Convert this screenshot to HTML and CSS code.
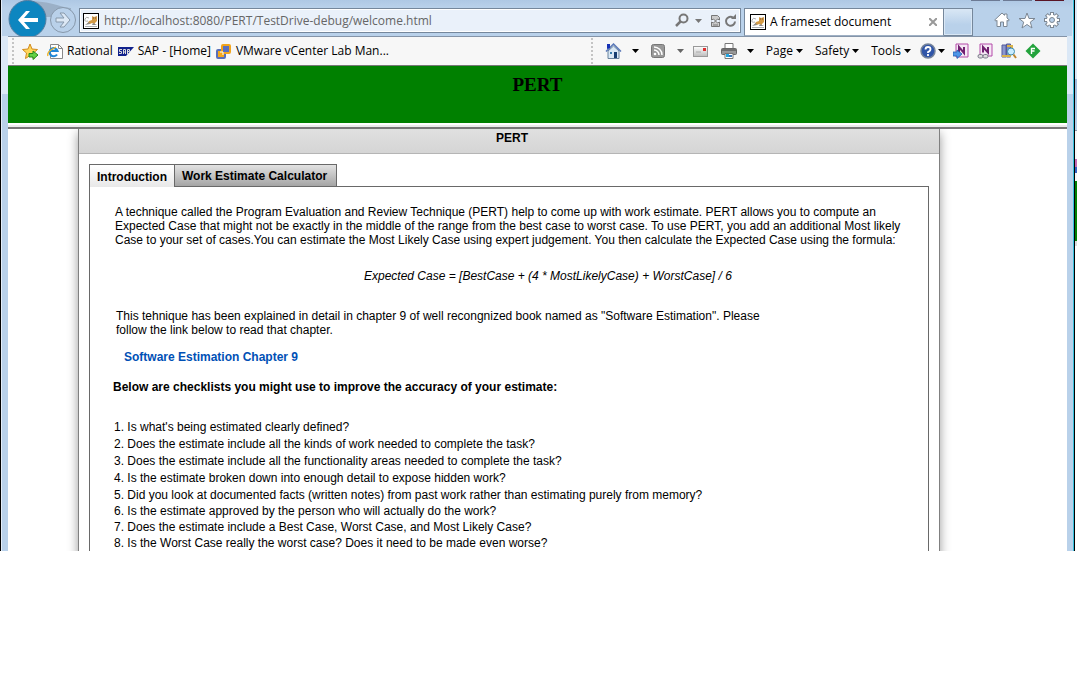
FILE: index.html
```html
<!DOCTYPE html>
<html lang="en">
<head>
<meta charset="utf-8">
<title>A frameset document</title>
<link rel="stylesheet" href="styles.css">
</head>
<body>
<svg width="0" height="0" class="defs" aria-hidden="true">
  <defs>
    <symbol id="cat" viewBox="0 0 16 16">
      <rect x=".5" y=".5" width="15" height="15" fill="#fff" stroke="#000"/>
      <path d="M2 13h12v1H2z" fill="#a9adb1"/>
      <path d="M5 8Q1 9 2 6t4-1" fill="none" stroke="#aaa"/>
      <path d="M4 11l2-3 3-1V3l2 1 3-1v5l-2 2v1l-3-1-2 1z" fill="#d39a45"/>
      <path d="M2 12l4-3 1 2zM10 10l4 2h-5z" fill="#888"/>
      <path d="M10 5h1M12 5h1" stroke="#754"/>
    </symbol>
    <symbol id="caret" viewBox="0 0 7 4"><path d="M0 0h7L3.500 4z" fill="currentColor"/></symbol>
    <linearGradient id="silver" x2="0" y2="1"><stop stop-color="#fff"/><stop offset="1" stop-color="#bbb"/></linearGradient>
  </defs>
</svg>
<div class="screen">
<div class="window">
  <header class="nav">
    <div class="captions" aria-hidden="true"><i></i><i></i><i class="close-cap"></i></div>
    <button class="back" aria-label="Back">
      <svg width="68" height="36" viewBox="0 0 68 36">
        <path d="M25 1q15 1 24 4t14 3v9H25z" fill="#9bb0c7"/>
        <circle cx="19.500" cy="19" r="18.500" fill="#0d86c0" stroke="#507c9f"/>
        <path d="M10 20l8-9h4l-6 7h14v4H16l6 7h-4z" fill="#fff"/>
        <circle cx="55" cy="20" r="12.500" fill="#b9d1ea" stroke="#8798aa"/>
        <path d="M48 18h8l-4-5h4l6 7-6 7h-4l4-5h-8z" fill="#dce8f5" stroke="#8798aa"/>
      </svg>
    </button>
    <form class="address">
      <svg width="16" height="16"><use href="#cat"/></svg>
      <input aria-label="Address" value="http://localhost:8080/PERT/TestDrive-debug/welcome.html">
      <svg width="62" height="16" viewBox="0 0 62 16" fill="none" stroke="#777" stroke-width="2">
        <circle cx="8.500" cy="5.500" r="4"/><path d="M5.500 8.500L1 13" stroke-width="2.500"/>
        <path d="M20 6h7l-3.500 4z" fill="#777" stroke="none"/>
        <path d="M36.500 7V2.500h6l2 2V7l-2-1-2 2-2-2zM36.500 9l2 1 2-2 2 2 2-1v4.500h-8z" stroke-width="1" fill="#ccc"/>
        <path d="M38 12h5" stroke-width="1"/>
        <path d="M58 4.500a4.500 4.500 0 1 0 2 4"/><path d="M56 6h5V1z" fill="#777" stroke="none"/>
      </svg>
    </form>
    <div class="tab">
      <svg width="16" height="16"><use href="#cat"/></svg>
      <span>A frameset document</span>
      <button class="x" aria-label="Close tab"><svg width="8" height="8" viewBox="0 0 8 8"><path d="M0 0l8 8M8 0L0 8" stroke="#999" stroke-width="2"/></svg></button>
    </div>
    <button class="newtab" aria-label="New tab"></button>
    <div class="tools">
      <button aria-label="Home"><svg width="16" height="16" viewBox="0 0 16 16"><path d="M.7 8L8 1l2.500 2.300V2H13v4l2.300 2-1.300 1.200-1-.9v6.200H9.500V10h-3v4.500H3V8.300l-1 .9z" fill="#fff" stroke="#7c8793"/></svg></button>
      <button aria-label="Favorites"><svg width="18" height="17" viewBox="0 0 18 17"><path d="M9 1l2 5.500h6l-4.700 3.600L14 16l-5-3.500L4 16l1.700-5.900L1 6.500h6z" fill="#fff" stroke="#7c8793"/></svg></button>
      <button aria-label="Settings"><svg width="16" height="16" viewBox="0 0 16 16"><g fill="#7c8793"><circle cx="8" cy="8" r="6"/><path d="M6 0h4v16H6z"/><path d="M6 0h4v16H6z" transform="rotate(45 8 8)"/><path d="M6 0h4v16H6z" transform="rotate(90 8 8)"/><path d="M6 0h4v16H6z" transform="rotate(135 8 8)"/></g><g fill="#fff"><circle cx="8" cy="8" r="5.200"/><path d="M7 1h2v14H7z"/><path d="M7 1h2v14H7z" transform="rotate(45 8 8)"/><path d="M7 1h2v14H7z" transform="rotate(90 8 8)"/><path d="M7 1h2v14H7z" transform="rotate(135 8 8)"/></g><circle cx="8" cy="8" r="2.500" fill="#b9d1ea" stroke="#7c8793"/></svg></button>
    </div>
  </header>

  <div class="client">
    <div class="bars">
      <nav class="links">
        <button class="add" aria-label="Add to favorites"><svg width="17" height="17" viewBox="0 0 17 17"><path d="M8 1l2 5 5.500.5-4 3.500 1 5.500L8 12.500 3.500 15.500l1-5.500-4-3.500L6 6z" fill="#ffd65a" stroke="#d18a1d"/><path d="M7 10.500h4V8l5 4-5 4.500V14H7z" fill="#63d145" stroke="#248a1c"/></svg></button>
        <a href="#rational"><svg width="16" height="17" viewBox="0 0 16 17"><path d="M3.500 1.500h8l4 4v10h-12z" fill="#fff" stroke="#888"/><path d="M11.500 1.500v4h4" fill="none" stroke="#888"/><path d="M10 11.500A4 4 0 1 1 10.500 8H4" fill="none" stroke="#1e86d6" stroke-width="2.200"/><path d="M1 13Q-1 9 9 4" fill="none" stroke="#f0b323" stroke-width="1.300"/></svg><span>Rational</span></a>
        <a href="#sap"><svg width="16" height="9" viewBox="0 0 16 9"><path d="M0 0h16l-8 9H0z" fill="#11228c"/><path d="M4 2.500H1.500v2h2v2H1M5.500 7V2.500h2V7M5.500 5h2M9.500 7V2.500h2v2h-2" fill="none" stroke="#ddd"/></svg><span>SAP - [Home]</span></a>
        <a href="#vmware"><svg width="16" height="16" viewBox="0 0 16 16" fill="none" stroke-width="2"><rect x="1" y="7" width="8" height="8" rx="1" stroke="#5a6fb8" fill="#f5a81c"/><rect x="6" y="2" width="8" height="8" rx="1" stroke="#f2a51d" fill="#5a70c0"/><path d="M4 9h3v3" stroke="#fff" stroke-width="1"/></svg><span>VMware vCenter Lab Man...</span></a>
      </nav>
      <div class="commands">
        <button class="home" aria-label="Home page"><svg width="17" height="17" viewBox="0 0 17 17"><path d="M3 8l5.500-5L14 8v7.500H3z" fill="#d9e8f5" stroke="#68829d"/><path d="M1 8.500L8.500 1 16 8.500" fill="none" stroke="#5a78b8" stroke-width="1.500"/><path d="M2 1h3v4L2 6z" fill="#1530b5"/><path d="M5 9h2v2H5z" fill="#387cac"/><path d="M9 9h3v6H9z" fill="#163c70"/></svg><svg class="caret"><use href="#caret"/></svg></button>
        <button class="feed" aria-label="Feeds"><svg width="14" height="14" viewBox="0 0 14 14"><rect x=".5" y=".5" width="13" height="13" rx="2" fill="#999" stroke="#777"/><circle cx="4" cy="10" r="1.300" fill="#fff"/><path d="M3 6a5 5 0 0 1 5 5M3 3a8 8 0 0 1 8 8" fill="none" stroke="#fff" stroke-width="1.500"/></svg><svg class="caret gray"><use href="#caret"/></svg></button>
        <button class="mail" aria-label="Read mail"><svg width="15" height="11" viewBox="0 0 15 11"><rect x=".5" y=".5" width="14" height="10" fill="url(#silver)" stroke="#999"/><path d="M10 2h3v3h-3z" fill="#dd3030"/><path d="M3 6h5" stroke="#aaa"/></svg></button>
        <button class="print" aria-label="Print"><svg width="16" height="16" viewBox="0 0 16 16"><path d="M4 .5h8V6H4z" fill="#fff" stroke="#777"/><rect x=".5" y="5.500" width="15" height="6" rx="1" fill="#999" stroke="#666"/><path d="M1 7h14" stroke="#444"/><path d="M4 10.500h8v5H4z" fill="#fff" stroke="#777"/><path d="M5 11h3v3H5z" fill="#22a7e0"/><path d="M8 12h3v2H8z" fill="#3b74b7"/></svg><svg class="caret"><use href="#caret"/></svg></button>
        <button class="menu">Page<svg class="caret"><use href="#caret"/></svg></button>
        <button class="menu">Safety<svg class="caret"><use href="#caret"/></svg></button>
        <button class="menu">Tools<svg class="caret"><use href="#caret"/></svg></button>
        <button class="help" aria-label="Help"><svg width="16" height="16" viewBox="0 0 16 16"><circle cx="8" cy="8" r="7" fill="#2f55a8" stroke="#75839a" stroke-width="1.500"/><path d="M5.500 6.500Q5.500 4 8 4t2.500 2T8 9v1M8 11v2" fill="none" stroke="#fff" stroke-width="1.800"/></svg><svg class="caret"><use href="#caret"/></svg></button>
        <button class="one" aria-label="Send to OneNote"><svg width="16" height="16" viewBox="0 0 16 16"><path d="M3 1h12v13H3z" fill="#f5e8f5" stroke="#b44ba9"/><path d="M6 10V4l5 6V4" fill="none" stroke="#702070" stroke-width="2"/><path d="M0 9h4V7l5 4-5 4.500V13H0z" fill="#4d96e8" stroke="#2460b0" stroke-width=".8"/></svg></button>
        <button class="one" aria-label="OneNote Linked Notes"><svg width="16" height="16" viewBox="0 0 16 16"><path d="M3 1h12v12H3z" fill="#f5e8f5" stroke="#b44ba9"/><path d="M6 9.500V4l5 5.500V4" fill="none" stroke="#702070" stroke-width="2"/><g fill="#ddd" stroke="#778"><rect x="1" y="11.500" width="5" height="3.500" rx="1.700"/><rect x="6" y="11.500" width="5" height="3.500" rx="1.700"/></g></svg></button>
        <button class="one" aria-label="Research"><svg width="16" height="16" viewBox="0 0 16 16"><path d="M1 2h4v12H1z" fill="#8a97cf" stroke="#555a99"/><path d="M5.500 1h4v13h-4z" fill="#7d8ac4" stroke="#555a99"/><path d="M6 2h6v2H6zM10 4h2v3h-2zM1 12h9v2H1z" fill="#d9b34a"/><circle cx="10" cy="8.500" r="3.500" fill="#c8ecff" stroke="#3f8cae"/><path d="M12.500 11.500L15 15" stroke="#be852d" stroke-width="2"/></svg></button>
        <button class="one" aria-label="Fiddler"><svg width="16" height="16" viewBox="0 0 16 16"><path d="M8 .5L15.500 8 8 15.500.5 8z" fill="#23a33d"/><path d="M6.500 11V5.500H10M6.500 8H9.500" fill="none" stroke="#fff" stroke-width="1.400"/></svg></button>
      </div>
    </div>
    <div class="banner"><h1>PERT</h1></div>
    <div class="splitter"></div>
    <main class="frame">
      <section class="panel">
        <h2>PERT</h2>
        <div class="tabs" role="tablist">
          <button role="tab" aria-selected="true" class="ptab active">Introduction</button>
          <button role="tab" aria-selected="false" class="ptab">Work Estimate Calculator</button>
        </div>
        <article class="body">
          <p class="intro">A technique called the Program Evaluation and Review Technique (PERT) help to come up with work estimate. PERT allows you to compute an<br>Expected Case that might not be exactly in the middle of the range from the best case to worst case. To use PERT, you add an additional Most likely<br>Case to your set of cases.You can estimate the Most Likely Case using expert judgement. You then calculate the Expected Case using the formula:</p>
          <p class="formula">Expected Case = [BestCase + (4 * MostLikelyCase) + WorstCase] / 6</p>
          <p class="book">This tehnique has been explained in detail in chapter 9 of well recongnized book named as "Software Estimation". Please<br>follow the link below to read that chapter.</p>
          <a class="chapter" href="#chapter9">Software Estimation Chapter 9</a>
          <h3>Below are checklists you might use to improve the accuracy of your estimate:</h3>
          <ul>
            <li class="loose">1. Is what's being estimated clearly defined?</li>
            <li class="loose">2. Does the estimate include all the kinds of work needed to complete the task?</li>
            <li class="loose">3. Does the estimate include all the functionality areas needed to complete the task?</li>
            <li class="loose">4. Is the estimate broken down into enough detail to expose hidden work?</li>
            <li>5. Did you look at documented facts (written notes) from past work rather than estimating purely from memory?</li>
            <li>6. Is the estimate approved by the person who will actually do the work?</li>
            <li>7. Does the estimate include a Best Case, Worst Case, and Most Likely Case?</li>
            <li>8. Is the Worst Case really the worst case? Does it need to be made even worse?</li>
          </ul>
        </article>
      </section>
    </main>
  </div>
</div>
<div class="behind" aria-hidden="true"></div>
</div>
</body>
</html>
```
FILE: styles.css
```css
* { box-sizing: border-box; }
body { margin: 0; background: #fff; font: 12px/14px "Liberation Sans", Arial, sans-serif; color: #000; }
.defs { position: absolute; }
svg { display: block; flex: none; }
button { border: 0; padding: 0; background: none; font: inherit; color: inherit; }
h1, h2, h3, p, ul { margin: 0; padding: 0; }
.screen { display: flex; }
.window {
  flex: 1;
  min-width: 0;
  border-left: 1px solid #000;
  border-right: 1px solid #000;
  box-shadow: inset 1px 0 #e4eefa, inset -1px 0 #35c0dc;
  background: linear-gradient(#b9d1ea 0, #dbe8f6 36px, #dbe8f6 94px, #b9d1ea 94px);
}
.behind {
  width: 2px;
  background: linear-gradient(#dce9f6 0 79px, #9fbbdc 79px, #b9d1ea 130px, #8796a8 130px 131px, #f7f7f7 131px 159px, #c46ab4 159px 167px, #3560c0 167px 173px, #f7f7f7 173px 181px, #008000 181px 241px, #ddd 241px 246px, #fff 246px);
}

/* Browser navigation row */
.nav {
  position: relative;
  display: flex;
  align-items: flex-end;
  height: 36px;
  margin: 0 2px 0 1px;
  padding-left: 6px;
  background: linear-gradient(#aec8e4, #b9d1ea 8px);
  font: 12px/16px "Open Sans", "Noto Sans", sans-serif;
}
.captions { position: absolute; top: 0; right: 8px; display: flex; gap: 3px; }
.captions i { width: 29px; height: 1px; background: #6c7a94; }
.captions .close-cap { background: #5a1525; }
.back { width: 68px; height: 36px; }
.address {
  flex: 1;
  display: flex;
  align-items: center;
  gap: 5px;
  height: 25px;
  margin: 0 3px 3px;
  padding: 0 3px;
  border: 1px solid #75879b;
  box-shadow: inset 0 0 0 1px #fff;
  background: #eaf1fa;
}
.address input { flex: 1; min-width: 0; padding: 0; border: 0; outline: 0; background: none; font: inherit; color: #666; }
.tab {
  display: flex;
  align-items: center;
  gap: 4px;
  width: 200px;
  height: 28px;
  padding: 0 6px 0 5px;
  border: 1px solid #75879b;
  border-bottom-color: #9fb0c4;
  background: #fff;
}
.tab span { flex: 1; }
.newtab { width: 29px; height: 28px; border: 1px solid #75879b; border-left: 0; background: linear-gradient(#d9e7f5, #b9d1ea 60%); box-shadow: inset 0 0 0 1px #d9e7f5; }
.tools { display: flex; align-items: center; gap: 8px; height: 32px; padding: 0 12px 0 21px; }

/* Favorites and command bars */
.client { margin: 0 7px; }
.bars {
  display: flex;
  justify-content: space-between;
  height: 30px;
  border-top: 1px solid #8494a8;
  border-bottom: 1px solid #777;
  background: #f7f7f7;
  font: 12px/16px "Open Sans", "Noto Sans", sans-serif;
}
.links, .commands { display: flex; align-items: center; margin: 1px 0; border-left: 2px dotted #c4c4c4; }
.links { margin-left: 4px; padding-left: 8px; gap: 5px; }
.links a { display: flex; align-items: center; gap: 4px; color: #000; text-decoration: none; }
.add { margin-right: 3px; }
.commands { padding-right: 26px; }
.commands button { display: flex; align-items: center; }
.caret { width: 7px; height: 4px; }
.gray { color: #666; }
.home { gap: 10px; margin-left: 12px; }
.feed { gap: 12px; margin-left: 12px; }
.mail { margin-left: 9px; }
.print { gap: 10px; margin-left: 13px; }
.menu { gap: 3px; margin-left: 12px; }
.help { gap: 2px; margin-left: 9px; }
.one { margin-left: 8px; }

/* Frameset */
.banner { height: 57px; background: #008000; }
.banner h1 { padding-top: 8px; text-align: center; font: bold 19px/22px "Liberation Serif", "Times New Roman", serif; }
.splitter { height: 6px; border-top: 2px solid #fff; border-bottom: 2px solid #777; background: #ececec; }
.frame { height: 422px; overflow: hidden; background: #fff; }
.panel {
  height: 440px;
  margin: 0 127px 0 70px;
  border: solid #808080;
  border-width: 0 1px;
  background: #fff;
  box-shadow: 0 4px 10px #999;
}
.panel h2 { height: 25px; padding: 2px 0 0 6px; border-bottom: 1px solid #b5b5b5; background: linear-gradient(#e0e0e0, #d5d5d5); text-align: center; font: bold 12px/14px "Liberation Sans", Arial, sans-serif; }
.tabs { position: relative; display: flex; margin: 10px 10px 0; }
.ptab { height: 23px; padding: 0 9px 0 7px; border: 1px solid #696969; background: linear-gradient(#e2e2e2, #a5a5a5); font-weight: bold; }
.ptab.active { border-right: 0; border-bottom: 0; padding-right: 7px; padding-top: 2px; background: linear-gradient(#fff, #e8e8e8); }
.body { height: 400px; margin: -1px 10px 0; padding: 18px 0 0 23px; border: 1px solid #696969; white-space: nowrap; }
.intro { padding-left: 2px; }
.formula { margin-top: 22px; padding-left: 251px; font-style: italic; }
.book { margin-top: 26px; padding-left: 3px; }
.chapter { display: block; width: max-content; margin: 13px 0 0 11px; color: #0050b5; font-weight: bold; text-decoration: none; }
.body h3 { margin-top: 16px; font: bold 12px/14px "Liberation Sans", Arial, sans-serif; }
.body ul { margin-top: 25px; padding-left: 1px; list-style: none; line-height: 16px; }
.body .loose { line-height: 17px; }
```
